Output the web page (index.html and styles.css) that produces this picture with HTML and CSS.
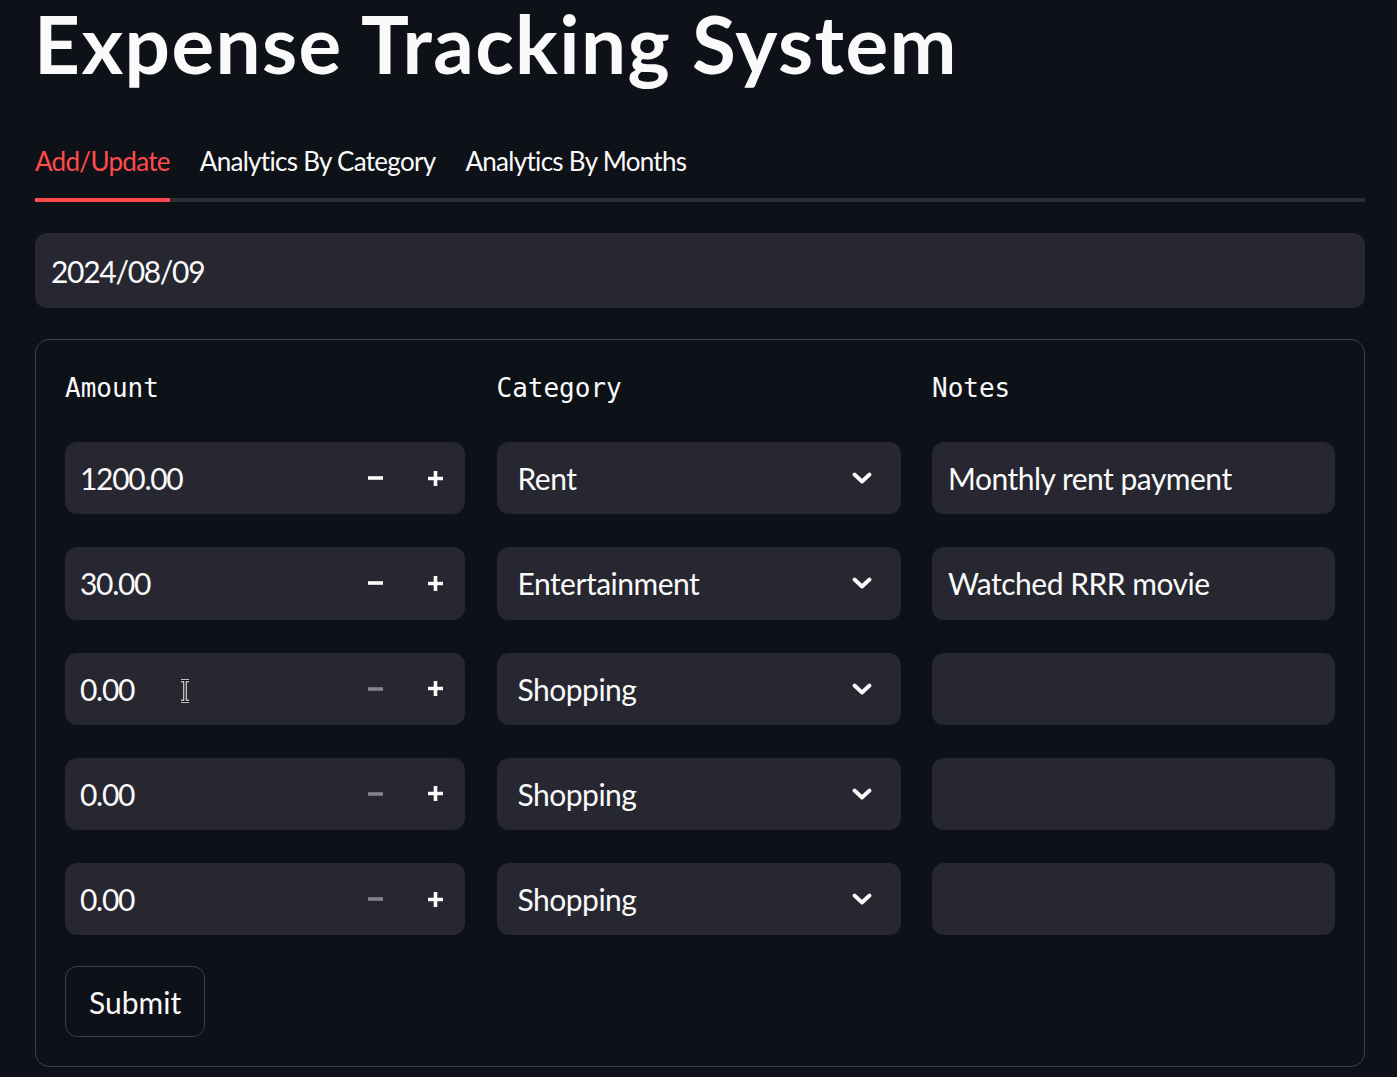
FILE: index.html
```html
<!DOCTYPE html>
<html lang="en">
<head>
<meta charset="utf-8">
<title>Expense Tracking System</title>
<link rel="stylesheet" href="styles.css">
</head>
<body>
<div class="app">
  <h1 class="title">Expense Tracking System</h1>
  <div class="tabs">
    <div class="tab active">Add/Update</div>
    <div class="tab">Analytics By Category</div>
    <div class="tab">Analytics By Months</div>
  </div>
  <div class="date-input"><span class="num">2024/08/09</span></div>
  <div class="form">
    <div class="grid">
      <div class="col">
        <div class="label">Amount</div>
        <div class="field number">
          <span class="value num">1200.00</span>
          <span class="step"><svg width="17" height="4" viewBox="0 0 17 4"><path d="M1 2H16" stroke="currentColor" stroke-width="3.6"/></svg></span>
          <span class="step"><svg width="17" height="17" viewBox="0 0 17 17"><path d="M1 8.5H16M8.5 1V16" stroke="currentColor" stroke-width="3.6"/></svg></span>
        </div>
        <div class="field number">
          <span class="value num">30.00</span>
          <span class="step"><svg width="17" height="4" viewBox="0 0 17 4"><path d="M1 2H16" stroke="currentColor" stroke-width="3.6"/></svg></span>
          <span class="step"><svg width="17" height="17" viewBox="0 0 17 17"><path d="M1 8.5H16M8.5 1V16" stroke="currentColor" stroke-width="3.6"/></svg></span>
        </div>
        <div class="field number">
          <span class="value num">0.00</span>
          <span class="step disabled"><svg width="17" height="4" viewBox="0 0 17 4"><path d="M1 2H16" stroke="currentColor" stroke-width="3.6"/></svg></span>
          <span class="step"><svg width="17" height="17" viewBox="0 0 17 17"><path d="M1 8.5H16M8.5 1V16" stroke="currentColor" stroke-width="3.6"/></svg></span>
          <svg class="cursor" width="12" height="24" viewBox="0 0 12 24"><path d="M2 1.5H10M6 1.5V22.5M2 22.5H10" stroke="#ffffff" stroke-width="3.4" fill="none"/><path d="M2 1.5H10M6 1.5V22.5M2 22.5H10" stroke="#111111" stroke-width="1.4" fill="none"/></svg>
        </div>
        <div class="field number">
          <span class="value num">0.00</span>
          <span class="step disabled"><svg width="17" height="4" viewBox="0 0 17 4"><path d="M1 2H16" stroke="currentColor" stroke-width="3.6"/></svg></span>
          <span class="step"><svg width="17" height="17" viewBox="0 0 17 17"><path d="M1 8.5H16M8.5 1V16" stroke="currentColor" stroke-width="3.6"/></svg></span>
        </div>
        <div class="field number">
          <span class="value num">0.00</span>
          <span class="step disabled"><svg width="17" height="4" viewBox="0 0 17 4"><path d="M1 2H16" stroke="currentColor" stroke-width="3.6"/></svg></span>
          <span class="step"><svg width="17" height="17" viewBox="0 0 17 17"><path d="M1 8.5H16M8.5 1V16" stroke="currentColor" stroke-width="3.6"/></svg></span>
        </div>
      </div>
      <div class="col">
        <div class="label">Category</div>
        <div class="field select"><span class="value">Rent</span><svg class="chev" width="20" height="12" viewBox="0 0 20 12"><path d="M2.5 2.5L10 9.5L17.5 2.5" stroke="currentColor" stroke-width="3.8" fill="none" stroke-linecap="round" stroke-linejoin="round"/></svg></div>
        <div class="field select"><span class="value">Entertainment</span><svg class="chev" width="20" height="12" viewBox="0 0 20 12"><path d="M2.5 2.5L10 9.5L17.5 2.5" stroke="currentColor" stroke-width="3.8" fill="none" stroke-linecap="round" stroke-linejoin="round"/></svg></div>
        <div class="field select"><span class="value">Shopping</span><svg class="chev" width="20" height="12" viewBox="0 0 20 12"><path d="M2.5 2.5L10 9.5L17.5 2.5" stroke="currentColor" stroke-width="3.8" fill="none" stroke-linecap="round" stroke-linejoin="round"/></svg></div>
        <div class="field select"><span class="value">Shopping</span><svg class="chev" width="20" height="12" viewBox="0 0 20 12"><path d="M2.5 2.5L10 9.5L17.5 2.5" stroke="currentColor" stroke-width="3.8" fill="none" stroke-linecap="round" stroke-linejoin="round"/></svg></div>
        <div class="field select"><span class="value">Shopping</span><svg class="chev" width="20" height="12" viewBox="0 0 20 12"><path d="M2.5 2.5L10 9.5L17.5 2.5" stroke="currentColor" stroke-width="3.8" fill="none" stroke-linecap="round" stroke-linejoin="round"/></svg></div>
      </div>
      <div class="col">
        <div class="label">Notes</div>
        <div class="field text"><span class="value">Monthly rent payment</span></div>
        <div class="field text"><span class="value">Watched RRR movie</span></div>
        <div class="field text"><span class="value"></span></div>
        <div class="field text"><span class="value"></span></div>
        <div class="field text"><span class="value"></span></div>
      </div>
    </div>
    <button class="submit" type="button">Submit</button>
  </div>
</div>
</body>
</html>
```
FILE: styles.css
```css
html, body {
  margin: 0;
  padding: 0;
  background: #0e1117;
}

body {
  color: #fafafa;
  font-family: Lato, "Open Sans", "Liberation Sans", sans-serif;
  width: 1397px;
  height: 1077px;
  overflow: hidden;
}

.app {
  padding: 2px 32px 0 35px;
  display: flex;
  flex-direction: column;
}

.title {
  margin: 0 0 0 -1px;
  font-size: 80px;
  line-height: 82px;
  font-weight: 700;
  letter-spacing: 1.4px;
  color: #fafafa;
}

.tabs {
  margin-top: 59px;
  display: flex;
  gap: 30px;
  box-shadow: inset 0 -4px 0 #2d2f36;
}

.tab {
  font-size: 26px;
  line-height: 36px;
  letter-spacing: -0.7px;
  padding-bottom: 23px;
  color: #fafafa;
  white-space: nowrap;
}

.tab.active {
  color: #ff4b4b;
  box-shadow: inset 0 -4px 0 #ff4b4b;
}

.date-input {
  margin-top: 31px;
  height: 75px;
  border-radius: 12px;
  background: #262730;
  display: flex;
  align-items: center;
  padding-left: 16px;
  font-size: 30px;
}

.num {
  letter-spacing: -1.3px;
}

.form {
  margin-top: 31px;
  border: 1px solid #3d3f46;
  border-radius: 14px;
  padding: 30px 29px 29px 29px;
  display: flex;
  flex-direction: column;
  align-items: flex-start;
}

.grid {
  align-self: stretch;
  display: grid;
  grid-template-columns: 400fr 404fr 403fr;
  column-gap: 31.5px;
}

.col {
  display: flex;
  flex-direction: column;
  gap: 33px;
}

.label {
  font-family: "DejaVu Sans Mono", "Liberation Mono", monospace;
  font-size: 26px;
  line-height: 36px;
  margin-left: 0;
  margin-bottom: 3px;
  color: #fafafa;
}

.field {
  position: relative;
  height: 72.25px;
  border-radius: 12px;
  background: #262730;
  display: flex;
  align-items: center;
  font-size: 30px;
  letter-spacing: -0.5px;
}

.field .value {
  flex: 1;
  white-space: nowrap;
}

.field .value.num {
  letter-spacing: -1.3px;
}

.number .value { padding-left: 15px; }
.select .value { padding-left: 21px; }
.text .value { padding-left: 16px; }

.step {
  width: 60px;
  height: 100%;
  display: flex;
  align-items: center;
  justify-content: center;
  color: #fafafa;
}

.step.disabled {
  color: #84858c;
}

.chev {
  margin-right: 29px;
  color: #fafafa;
}

.cursor {
  position: absolute;
  left: 114px;
  top: 26px;
}

.submit {
  margin-top: 31px;
  height: 71px;
  padding: 0 23px;
  border: 1px solid #3d3f46;
  border-radius: 12px;
  background: #0e1117;
  color: #fafafa;
  font-family: Lato, "Open Sans", "Liberation Sans", sans-serif;
  font-size: 30px;
}
```
